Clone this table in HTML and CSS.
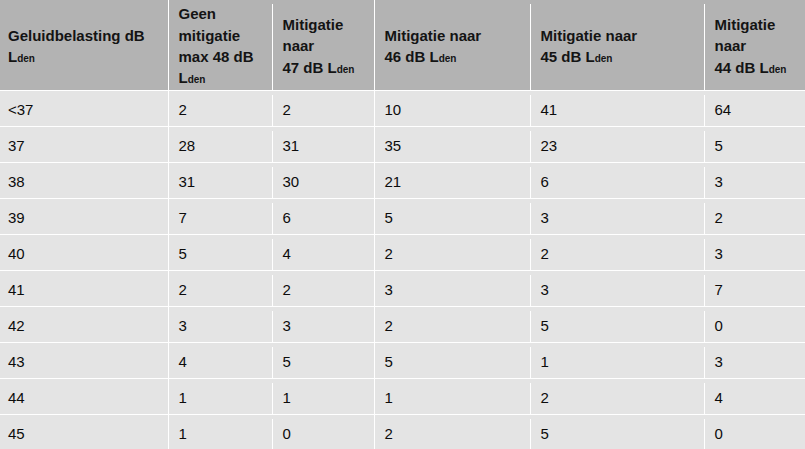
FILE: index.html
```html
<!DOCTYPE html>
<html lang="nl">
<head>
<meta charset="utf-8">
<title>Geluidbelasting</title>
<link rel="stylesheet" href="styles.css">
</head>
<body>
<div class="table">
  <div class="cell head c1"><p class="in">Geluidbelasting dB<br>L<span class="sub">den</span></p></div>
  <div class="cell head c2"><p class="in">Geen<br>mitigatie<br>max 48 dB<br>L<span class="sub">den</span></p></div>
  <div class="cell head c3"><p class="in">Mitigatie<br>naar<br>47 dB L<span class="sub">den</span></p></div>
  <div class="cell head c4"><p class="in">Mitigatie naar<br>46 dB L<span class="sub">den</span></p></div>
  <div class="cell head c5"><p class="in">Mitigatie naar<br>45 dB L<span class="sub">den</span></p></div>
  <div class="cell head c6"><p class="in">Mitigatie<br>naar<br>44 dB L<span class="sub">den</span></p></div>

  <div class="cell c1">&lt;37</div><div class="cell c2">2</div><div class="cell c3">2</div><div class="cell c4">10</div><div class="cell c5">41</div><div class="cell c6">64</div>
  <div class="cell c1">37</div><div class="cell c2">28</div><div class="cell c3">31</div><div class="cell c4">35</div><div class="cell c5">23</div><div class="cell c6">5</div>
  <div class="cell c1">38</div><div class="cell c2">31</div><div class="cell c3">30</div><div class="cell c4">21</div><div class="cell c5">6</div><div class="cell c6">3</div>
  <div class="cell c1">39</div><div class="cell c2">7</div><div class="cell c3">6</div><div class="cell c4">5</div><div class="cell c5">3</div><div class="cell c6">2</div>
  <div class="cell c1">40</div><div class="cell c2">5</div><div class="cell c3">4</div><div class="cell c4">2</div><div class="cell c5">2</div><div class="cell c6">3</div>
  <div class="cell c1">41</div><div class="cell c2">2</div><div class="cell c3">2</div><div class="cell c4">3</div><div class="cell c5">3</div><div class="cell c6">7</div>
  <div class="cell c1">42</div><div class="cell c2">3</div><div class="cell c3">3</div><div class="cell c4">2</div><div class="cell c5">5</div><div class="cell c6">0</div>
  <div class="cell c1">43</div><div class="cell c2">4</div><div class="cell c3">5</div><div class="cell c4">5</div><div class="cell c5">1</div><div class="cell c6">3</div>
  <div class="cell c1">44</div><div class="cell c2">1</div><div class="cell c3">1</div><div class="cell c4">1</div><div class="cell c5">2</div><div class="cell c6">4</div>
  <div class="cell c1">45</div><div class="cell c2">1</div><div class="cell c3">0</div><div class="cell c4">2</div><div class="cell c5">5</div><div class="cell c6">0</div>
</div>
</body>
</html>
```
FILE: styles.css
```css
html, body {
  margin: 0;
  padding: 0;
  background: #ffffff;
}

body {
  font-family: "Liberation Sans", Arial, sans-serif;
  font-size: 15px;
  color: #0c0c0c;
}

.table {
  width: 805px;
  display: grid;
  grid-template-columns: 168px 104px 102px 156px 174px 101px;
  grid-template-rows: 90px repeat(10, 35px);
  row-gap: 1px;
  background: #ffffff;
}

.cell {
  display: flex;
  align-items: center;
  line-height: 21px;
  padding-left: 10.5px;
  padding-top: 1px;
  background-color: #e4e4e4;
  background-repeat: no-repeat;
}

.cell.head {
  background-color: #b3b3b3;
  font-weight: bold;
  color: #141414;
  line-height: 21.4px;
  padding-top: 4px;
}

.in {
  margin: 0;
}

.c1 {
  padding-left: 8px;
}

/* full-height white column separators */
.c2, .c4 {
  background-image: linear-gradient(#ffffff, #ffffff);
  background-size: 1px 100%;
  background-position: left top;
}

/* separators that start a little below the row line */
.c3, .c5, .c6 {
  background-image: linear-gradient(#ffffff, #ffffff);
  background-size: 1px calc(100% - 4px);
  background-position: left bottom;
}

.sub {
  font-size: 10px;
}
```
